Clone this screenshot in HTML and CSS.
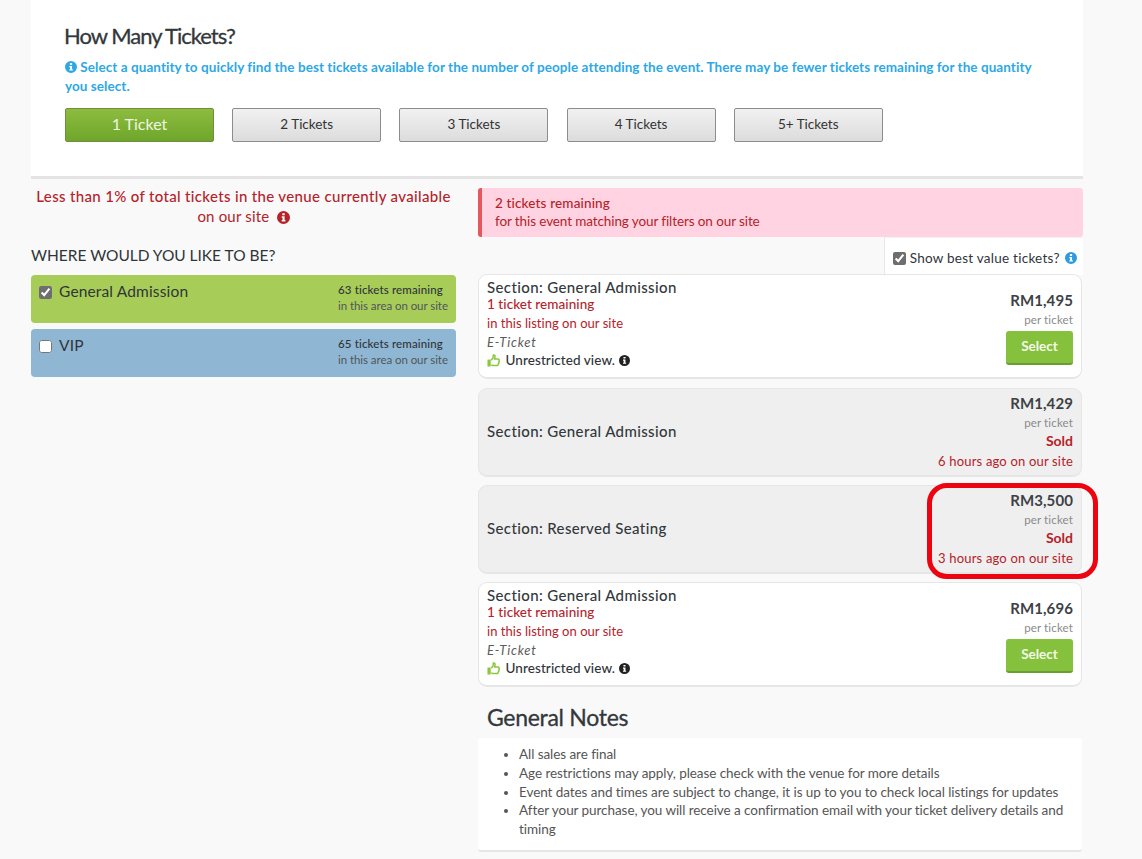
FILE: index.html
```html
<!DOCTYPE html>
<html lang="en">
<head>
<meta charset="utf-8">
<title>How Many Tickets?</title>
<link rel="stylesheet" href="styles.css">
</head>
<body>
<svg class="sprite" width="0" height="0" aria-hidden="true">
  <symbol id="info" viewBox="0 0 16 16"><path fill-rule="evenodd" d="M8 0a8 8 0 1 1 0 16A8 8 0 0 1 8 0zM6.500 2.800v2.400h3V2.800zM5.800 6.600v1.600h1v2.900h-1v1.700h4.600v-1.700h-1V6.600z"/></symbol>
  <symbol id="thumb" viewBox="0 0 14 14"><path d="M0.500 6h3.500v7.500H0.500z"/><path fill="none" stroke="currentColor" stroke-width="1.600" d="M4.500 6.800l2-2.600L6.900 1c1.500-.3 2 1 1.700 2.400L8.200 5.300h3.700c1.100 0 1.500 1 1 1.800.5.700.3 1.500-.3 1.900.3.800 0 1.400-.6 1.800.1 1-.4 1.700-1.400 1.700H7c-1.200 0-1.600-.4-2.500-.8"/></symbol>
</svg>
<main class="page">
  <section class="qty-panel">
    <h2 class="qty-title">How Many Tickets?</h2>
    <p class="qty-hint"><svg class="icon icon-hint"><use href="#info"/></svg> Select a quantity to quickly find the best tickets available for the number of people attending the event. There may be fewer tickets remaining for the quantity you select.</p>
    <div class="qty-buttons">
      <button class="qty-btn qty-btn-active">1 Ticket</button>
      <button class="qty-btn">2 Tickets</button>
      <button class="qty-btn">3 Tickets</button>
      <button class="qty-btn">4 Tickets</button>
      <button class="qty-btn">5+ Tickets</button>
    </div>
  </section>
  <div class="columns">
    <aside class="left">
      <p class="scarcity"><strong>Less than 1% of total tickets in the venue currently available</strong><br><span class="scarcity-sub">on our site</span> <svg class="icon icon-scarcity"><use href="#info"/></svg></p>
      <h3 class="where">WHERE WOULD YOU LIKE TO BE?</h3>
      <label class="area area-green">
        <input type="checkbox" class="check" checked>
        <span class="area-name">General Admission</span>
        <span class="area-count"><b>63 tickets remaining</b><br>in this area on our site</span>
      </label>
      <label class="area area-blue">
        <input type="checkbox" class="check">
        <span class="area-name">VIP</span>
        <span class="area-count"><b>65 tickets remaining</b><br>in this area on our site</span>
      </label>
    </aside>
    <div class="right">
      <div class="alert"><strong>2 tickets remaining</strong><br><span class="alert-sub">for this event matching your filters on our site</span></div>
      <div class="best-row">
        <label class="best"><input type="checkbox" class="check" checked> Show best value tickets? <svg class="icon icon-best"><use href="#info"/></svg></label>
      </div>
      <article class="card card-listing card-first">
        <div class="card-main">
          <div class="sec">Section: General Admission</div>
          <div class="rem">1 ticket remaining</div>
          <div class="rem-sub">in this listing on our site</div>
          <div class="etype">E-Ticket</div>
          <div class="view"><svg class="icon icon-thumb"><use href="#thumb"/></svg> Unrestricted view. <svg class="icon icon-view"><use href="#info"/></svg></div>
        </div>
        <div class="card-side card-side-buy">
          <div class="price">RM1,495</div>
          <div class="per">per ticket</div>
          <button class="select">Select</button>
        </div>
      </article>
      <article class="card card-sold">
        <div class="sec">Section: General Admission</div>
        <div class="card-side">
          <div class="price">RM1,429</div>
          <div class="per">per ticket</div>
          <div class="sold">Sold</div>
          <div class="ago">6 hours ago on our site</div>
        </div>
      </article>
      <article class="card card-sold">
        <div class="sec">Section: Reserved Seating</div>
        <div class="card-side">
          <div class="price">RM3,500</div>
          <div class="per">per ticket</div>
          <div class="sold">Sold</div>
          <div class="ago">3 hours ago on our site</div>
        </div>
        <div class="ring"></div>
      </article>
      <article class="card card-listing">
        <div class="card-main">
          <div class="sec">Section: General Admission</div>
          <div class="rem">1 ticket remaining</div>
          <div class="rem-sub">in this listing on our site</div>
          <div class="etype">E-Ticket</div>
          <div class="view"><svg class="icon icon-thumb"><use href="#thumb"/></svg> Unrestricted view. <svg class="icon icon-view"><use href="#info"/></svg></div>
        </div>
        <div class="card-side card-side-buy">
          <div class="price">RM1,696</div>
          <div class="per">per ticket</div>
          <button class="select">Select</button>
        </div>
      </article>
      <h2 class="notes-title">General Notes</h2>
      <ul class="notes">
        <li>All sales are final</li>
        <li>Age restrictions may apply, please check with the venue for more details</li>
        <li>Event dates and times are subject to change, it is up to you to check local listings for updates</li>
        <li>After your purchase, you will receive a confirmation email with your ticket delivery details and timing</li>
      </ul>
    </div>
  </div>
</main>
</body>
</html>
```
FILE: styles.css
```css
* { box-sizing: border-box; }
html, body { margin: 0; height: 859px; overflow: hidden; }
body { background: #f9f9f9; color: #333a40; font-family: Lato, "Noto Sans", sans-serif; font-size: 14px; }
.sprite { position: absolute; }
.icon { fill: currentColor; display: inline-block; vertical-align: -2px; }
.page { width: 1052px; margin-left: 31px; }

.qty-panel { background: #fff; height: 179px; padding: 21px 34px 0; border-bottom: 3px solid #e4e4e4; }
.qty-title { margin: 0 0 0 -1px; font-size: 22px; line-height: 29px; font-weight: 400; letter-spacing: -1px; color: #33373a; -webkit-text-stroke: 0.3px #33373a; }
.qty-hint { margin: 8px 0 0; font-size: 13.5px; line-height: 19px; color: #2ea8e5; font-weight: 700; letter-spacing: 0.065px; }
.icon-hint { width: 12px; height: 12px; vertical-align: -1px; }
.qty-buttons { display: flex; gap: 18.2px; margin-top: 12px; }
.qty-btn { width: 149px; height: 34px; padding: 0 0 2px; border: 1px solid #8c8c8c; border-radius: 2px; background: linear-gradient(#f1f1f1, #dcdcdc); font: 13.5px Lato, sans-serif; color: #333; }
.qty-btn-active { border-color: #6f8f3d; background: linear-gradient(#8dbc3f, #6ea62b); color: #eef6e0; font-size: 16px; padding-bottom: 3px; }

.columns { display: flex; gap: 22px; margin-top: 9px; align-items: flex-start; }
.left { width: 425px; }
.right { width: 605px; }

.scarcity { margin: -2px 0 0; text-align: center; font-size: 15px; line-height: 20px; color: #b5222a; letter-spacing: 0.34px; }
.scarcity strong { font-weight: 500; }
.scarcity-sub { letter-spacing: 0.19px; }
.icon-scarcity { width: 13px; height: 13px; margin-left: 3px; }
.where { margin: 19px 0 10px; font-size: 15.5px; line-height: 20px; font-weight: 400; color: #30353a; letter-spacing: -0.02px; }
.area { display: flex; align-items: flex-start; height: 48px; padding: 7px 8px 0 8px; margin-bottom: 6px; border-radius: 4px; color: #30353a; }
.area-green { background: #a8cc58; }
.area-blue { background: #8fb6d3; }
.check { width: 13px; height: 13px; margin: 4px 0 0; accent-color: #6e6e6e; }
.area-name { margin-left: 7px; font-size: 15.5px; line-height: 19px; letter-spacing: 0.15px; }
.area-count { margin-left: auto; width: 110px; font-size: 11.5px; line-height: 16px; color: #50565a; white-space: nowrap; letter-spacing: -0.06px; }
.area-count b { font-weight: 500; color: #30353a; letter-spacing: 0.14px; }

.alert { height: 49px; padding: 5.5px 0 0 13px; background: #ffd3e2; border-left: 4px solid #e4575c; border-radius: 3px; font-size: 13.5px; line-height: 18px; color: #b5222a; letter-spacing: 0.15px; }
.alert strong { font-weight: 500; }
.alert-sub { letter-spacing: -0.1px; }
.best-row { display: flex; justify-content: flex-end; height: 38px; }
.best { width: 199px; padding: 11px 0 0 8px; background: #fff; border-left: 1px solid #e8e8e8; border-top: 1px solid #f2f2f2; font-size: 13.5px; line-height: 18px; letter-spacing: 0.25px; white-space: nowrap; color: #30353a; }
.best .check { margin: 0; vertical-align: -2px; }
.icon-best { width: 12px; height: 12px; margin-left: 2px; color: #2e9ae0; vertical-align: -1px; }

.card { position: relative; display: flex; justify-content: space-between; align-items: center; width: 604px; height: 105px; margin-bottom: 9px; padding: 0 8px; background: #fff; border: 1px solid #e6e6e6; border-bottom-width: 2px; border-radius: 9px; }
.card-first { margin-top: -1px; }
.card-sold { height: 89px; margin-bottom: 8px; background: #efefef; }
.card-main { align-self: flex-start; padding-top: 3px; }
.card-sold .sec { margin-bottom: 2px; }
.sec { font-size: 15px; line-height: 18px; font-weight: 500; letter-spacing: 0.38px; color: #33383c; }
.rem { font-size: 13.5px; line-height: 16px; font-weight: 500; color: #b5222a; letter-spacing: 0.06px; }
.rem-sub { font-size: 13px; line-height: 22px; color: #b5222a; letter-spacing: 0.03px; }
.etype { font-size: 13px; line-height: 16px; font-style: italic; color: #5b5b5b; letter-spacing: 0.8px; }
.view { font-size: 13.5px; line-height: 20px; font-weight: 500; color: #30353a; letter-spacing: 0.08px; }
.icon-thumb { width: 13px; height: 13px; color: #8cc63f; margin-right: 2px; }
.icon-view { width: 11px; height: 11px; color: #222; vertical-align: -1px; }
.card-side { text-align: right; }
.card-side-buy { margin-top: 2px; }
.price { font-size: 15px; line-height: 20px; font-weight: 700; color: #3d4246; letter-spacing: 0.1px; }
.per { font-size: 11.5px; line-height: 18px; margin-top: 1px; color: #8a8a8a; letter-spacing: 0.14px; }
.sold { font-size: 14px; line-height: 18px; font-weight: 700; color: #b5222a; }
.ago { font-size: 13px; line-height: 22px; color: #b5222a; letter-spacing: 0.18px; }
.select { display: block; width: 67px; height: 34px; margin: 2px 0 0 auto; padding: 0 0 1px; border: 0; border-bottom: 2px solid #6a9e35; border-radius: 3px; background: #86c13d; color: #f3f9e8; font: 700 13.5px Lato, sans-serif; }
.ring { position: absolute; right: -17px; top: -3px; width: 171px; height: 96px; border: 5px solid #ec0410; border-radius: 20px; }

.notes-title { margin: 16px 0 0 9px; font-size: 23px; line-height: 29px; font-weight: 400; color: #33383c; letter-spacing: -0.3px; -webkit-text-stroke: 0.3px #33383c; }
.notes { width: 604px; height: 114px; margin: 6px 0 0; padding: 7px 12px 0 41px; background: #fff; border-bottom: 2px solid #e6e6e6; border-radius: 3px; font-size: 13.5px; line-height: 18.8px; color: #555; letter-spacing: -0.065px; }
```
